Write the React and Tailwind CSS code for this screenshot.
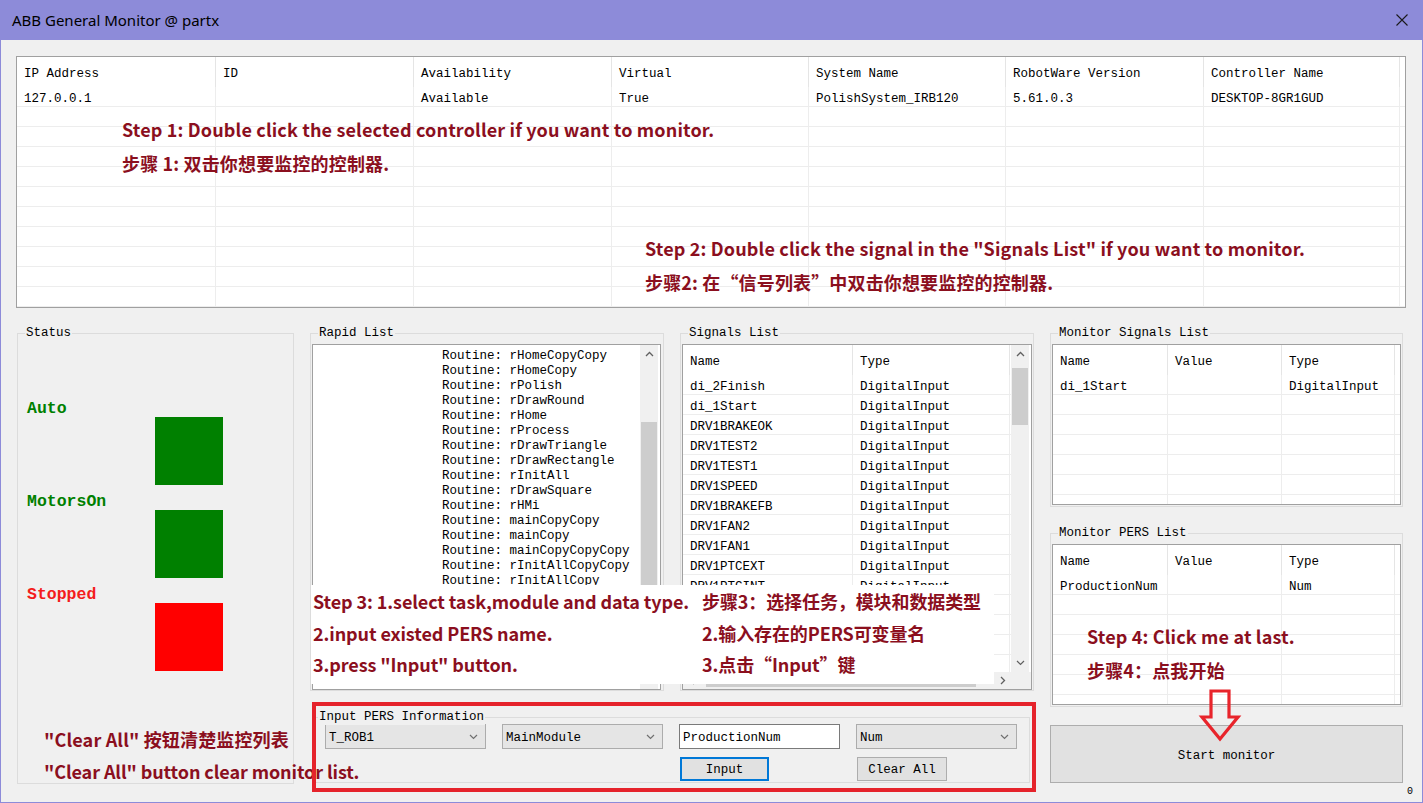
import React from 'react';

const MONO = "font-['Liberation_Mono','DejaVu_Sans_Mono',monospace] text-[12.5px] text-black";
const ANN = "font-['Noto_Sans_CJK_SC',sans-serif] font-bold text-[18px] leading-[20px] tracking-[0.15px] text-[#8b0f1e] whitespace-nowrap";
const ANN0 = "font-['Noto_Sans_CJK_SC',sans-serif] font-bold text-[18px] leading-[20px] tracking-[-0.1px] text-[#8b0f1e] whitespace-nowrap";

function ChevUp() {
  return (
    <svg width="9" height="6" viewBox="0 0 9 6">
      <path d="M1 5 L4.5 1.5 L8 5" fill="none" stroke="#606060" strokeWidth="1.3" />
    </svg>
  );
}
function ChevDown({ color = '#606060' }) {
  return (
    <svg width="9" height="6" viewBox="0 0 9 6">
      <path d="M1 1 L4.5 4.5 L8 1" fill="none" stroke={color} strokeWidth="1.2" />
    </svg>
  );
}
function ChevRight() {
  return (
    <svg width="6" height="9" viewBox="0 0 6 9">
      <path d="M1 1 L4.5 4.5 L1 8" fill="none" stroke="#606060" strokeWidth="1.3" />
    </svg>
  );
}
function ChevLeft() {
  return (
    <svg width="6" height="9" viewBox="0 0 6 9">
      <path d="M5 1 L1.5 4.5 L5 8" fill="none" stroke="#606060" strokeWidth="1.3" />
    </svg>
  );
}

function GroupBox({ label, className = '', labelPos = 'left-[7px]', children }) {
  return (
    <div className={`relative border border-[#dcdcdc] shrink-0 ${className}`}>
      <span className={`absolute -top-[9px] ${labelPos} bg-[#f0f0f0] px-[1px] leading-[16px] whitespace-nowrap ${MONO}`}>
        {label}
      </span>
      {children}
    </div>
  );
}

function Grid({ widths, header, rows, nRows }) {
  return (
    <>
      <div className="flex h-[30px] shrink-0">
        {header.map((h, i) => (
          <div key={i} className={`${widths[i]} shrink-0 h-full border-r border-[#e5e5e5] pl-[7px] pt-[5px] flex items-center whitespace-nowrap`}>
            {h}
          </div>
        ))}
      </div>
      {Array.from({ length: nRows }).map((_, r) => (
        <div key={r} className="flex h-[20px] shrink-0 border-b border-[#ededed]">
          {widths.map((w, i) => (
            <div key={i} className={`${w} shrink-0 h-full border-r border-[#ededed] pl-[7px] pt-[6px] flex items-center whitespace-nowrap overflow-hidden`}>
              {rows[r] ? rows[r][i] : ''}
            </div>
          ))}
        </div>
      ))}
    </>
  );
}

const topWidths = ['w-[199px]', 'w-[198px]', 'w-[198px]', 'w-[197px]', 'w-[197px]', 'w-[198px]', 'w-[196px]'];
const topHeader = ['IP Address', 'ID', 'Availability', 'Virtual', 'System Name', 'RobotWare Version', 'Controller Name'];
const topRows = [['127.0.0.1', '', 'Available', 'True', 'PolishSystem_IRB120', '5.61.0.3', 'DESKTOP-8GR1GUD']];

const routines = [
  'rHomeCopyCopy', 'rHomeCopy', 'rPolish', 'rDrawRound', 'rHome', 'rProcess', 'rDrawTriangle',
  'rDrawRectangle', 'rInitAll', 'rDrawSquare', 'rHMi', 'mainCopyCopy', 'mainCopy', 'mainCopyCopyCopy',
  'rInitAllCopyCopy', 'rInitAllCopy', 'main', 'rTest', 'rReset', 'rStart', 'rStop',
];

const signals = [
  'di_2Finish', 'di_1Start', 'DRV1BRAKEOK', 'DRV1TEST2', 'DRV1TEST1', 'DRV1SPEED', 'DRV1BRAKEFB',
  'DRV1FAN2', 'DRV1FAN1', 'DRV1PTCEXT', 'DRV1PTCINT', 'DRV1K1', 'DRV1K2', 'DRV1LIM1', 'DRV1LIM2',
].map((s) => [s, 'DigitalInput']);

const monWidths = ['w-[115px]', 'w-[114px]', 'w-[113px]'];

function StatusBlock({ label, color, textColor }) {
  return (
    <div>
      <div className={`h-[16px] leading-[16px] font-['Liberation_Mono',monospace] font-bold text-[16.5px] ${textColor}`}>{label}</div>
      <div className={`ml-[128px] w-[68px] h-[68px] ${color}`} />
    </div>
  );
}

function Combo({ text }) {
  return (
    <div className={`flex items-center justify-between border border-[#acacac] bg-[#e5e5e5] h-[25px] pl-[3px] pr-[7px] ${MONO}`}>
      <span className="pt-[3px]">{text}</span>
      <ChevDown color="#707070" />
    </div>
  );
}

function Annotations() {
  return (
    <div className="absolute inset-0 pointer-events-none">
      <div className={`absolute left-[122px] top-[119px] ${ANN}`}>Step 1: Double click the selected controller if you want to monitor.</div>
      <div className={`absolute left-[122px] top-[153px] ${ANN}`}>步骤 1: 双击你想要监控的控制器.</div>
      <div className={`absolute left-[645px] top-[238px] ${ANN}`}>Step 2: Double click the signal in the "Signals List" if you want to monitor.</div>
      <div className={`absolute left-[645px] top-[272px] ${ANN}`}>步骤2: 在“信号列表”中双击你想要监控的控制器.</div>

      <div className="absolute left-[311px] top-[585px] w-[683px] h-[99px] bg-white pl-[2px] pt-[6px] flex flex-col gap-[11.5px]">
        <div className="flex">
          <div className={`w-[389px] ${ANN0}`}>Step 3: 1.select task,module and data type.</div>
          <div className={ANN0}>步骤3：选择任务，模块和数据类型</div>
        </div>
        <div className="flex">
          <div className={`w-[389px] ${ANN0}`}>2.input existed PERS name.</div>
          <div className={ANN0}>2.输入存在的PERS可变量名</div>
        </div>
        <div className="flex">
          <div className={`w-[389px] ${ANN0}`}>3.press "Input" button.</div>
          <div className={ANN0}>3.点击“Input”键</div>
        </div>
      </div>

      <div className={`absolute left-[1087px] top-[626px] ${ANN}`}>Step 4: Click me at last.</div>
      <div className={`absolute left-[1087px] top-[660px] ${ANN}`}>步骤4：点我开始</div>
      <svg className="absolute left-[1198px] top-[688px]" width="44" height="54" viewBox="0 0 44 54">
        <path d="M13 3 L31 3 L31 29 L40 29 L22 51 L4 29 L13 29 Z" fill="none" stroke="#e8242b" strokeWidth="3.2" strokeLinejoin="miter" />
      </svg>

      <div className={`absolute left-[44px] top-[729px] ${ANN}`}>"Clear All" 按钮清楚监控列表</div>
      <div className={`absolute left-[44px] top-[761px] ${ANN0}`}>"Clear All" button clear monitor list.</div>
      <div className="absolute left-[312px] top-[702px] w-[724px] h-[90px] border-4 border-[#e5232b]" />
    </div>
  );
}

export default function App() {
  return (
    <div className="relative w-[1423px] h-[803px] bg-[#8d8bd9] px-[1px] pb-[1px] flex flex-col overflow-hidden">
      {/* Title bar */}
      <div className="h-[40px] shrink-0 flex items-center justify-between pl-[11px] pr-[14px]">
        <span className="font-['Noto_Sans',sans-serif] text-[15px] text-black leading-none">ABB General Monitor @ partx</span>
        <svg width="12" height="12" viewBox="0 0 12 12">
          <path d="M0.5 0.5 L11.5 11.5 M11.5 0.5 L0.5 11.5" stroke="#1a1a1a" strokeWidth="1.1" />
        </svg>
      </div>

      {/* Body */}
      <div className={`flex-1 bg-[#f0f0f0] flex flex-col ${MONO}`}>
        {/* Controllers table */}
        <div className="ml-[15px] mt-[16px] w-[1390px] h-[252px] border border-[#a0a0a0] bg-white overflow-hidden flex flex-col">
          <Grid widths={topWidths} header={topHeader} rows={topRows} nRows={11} />
        </div>

        <div className="flex ml-[16px] mt-[25px]">
          {/* Status */}
          <GroupBox label="Status" className="w-[277px] h-[451px]">
            <div className="pl-[9px] pt-[67px] flex flex-col gap-[9px]">
              <StatusBlock label="Auto" color="bg-[#008000]" textColor="text-[#008000]" />
              <StatusBlock label="MotorsOn" color="bg-[#008000]" textColor="text-[#008000]" />
              <StatusBlock label="Stopped" color="bg-[#ff0000]" textColor="text-[#f41c1c]" />
            </div>
          </GroupBox>

          {/* Middle */}
          <div className="ml-[16px] w-[724px] flex flex-col shrink-0">
            <div className="flex gap-[16px] h-[358px]">
              <GroupBox label="Rapid List" className="w-[354px] h-[358px]">
                <div className="ml-[1px] mt-[10px] w-[349px] h-[346px] border border-[#a0a0a0] bg-white flex overflow-hidden">
                  <div className="flex-1 pl-[129px] pt-[4px] overflow-hidden">
                    {routines.map((r) => (
                      <div key={r} className="h-[15px] leading-[15px] whitespace-pre">{'Routine: ' + r}</div>
                    ))}
                  </div>
                  <div className="w-[18px] mr-[2px] flex flex-col bg-[#f0f0f0] shrink-0">
                    <div className="h-[18px] flex items-center justify-center"><ChevUp /></div>
                    <div className="h-[59px]" />
                    <div className="flex-1 mx-[1px] bg-[#cdcdcd]" />
                    <div className="h-[18px] flex items-center justify-center"><ChevDown /></div>
                  </div>
                </div>
              </GroupBox>

              <GroupBox label="Signals List" className="w-[354px] h-[358px]">
                <div className="ml-[1px] mt-[10px] w-[350px] h-[346px] border border-[#a0a0a0] bg-white flex flex-col overflow-hidden">
                  <div className="flex flex-1 overflow-hidden">
                    <div className="flex-1 flex flex-col overflow-hidden">
                      <Grid widths={['w-[170px]', 'w-[157px]']} header={['Name', 'Type']} rows={signals} nRows={15} />
                    </div>
                    <div className="w-[18px] mr-[2px] flex flex-col bg-[#f0f0f0] shrink-0">
                      <div className="h-[18px] flex items-center justify-center"><ChevUp /></div>
                      <div className="h-[5px]" />
                      <div className="h-[57px] mx-[1px] bg-[#cdcdcd]" />
                      <div className="flex-1" />
                      <div className="h-[18px] flex items-center justify-center"><ChevDown /></div>
                    </div>
                  </div>
                  <div className="h-[17px] flex bg-[#f0f0f0] shrink-0">
                    <div className="w-[17px] flex items-center justify-center"><ChevLeft /></div>
                    <div className="w-[6px]" />
                    <div className="w-[270px] my-[2px] bg-[#cdcdcd]" />
                    <div className="flex-1" />
                    <div className="w-[17px] flex items-center justify-center"><ChevRight /></div>
                    <div className="w-[20px] bg-[#f0f0f0]" />
                  </div>
                </div>
              </GroupBox>
            </div>

            <GroupBox label="Input PERS Information" labelPos="left-[2px]" className="ml-[5px] mt-[26px] w-[715px] h-[66px]">
              <div className="pl-[9px] pt-[6px] grid grid-cols-[161px_161px_161px_161px] gap-x-[16px] gap-y-[8px]">
                <Combo text="T_ROB1" />
                <Combo text="MainModule" />
                <div className="h-[25px] border border-[#7a7a7a] bg-white flex items-center pl-[3px] pt-[3px]">ProductionNum</div>
                <Combo text="Num" />
                <div />
                <div />
                <div className="ml-[1px] w-[89px] h-[24px] border-2 border-[#0078d7] bg-[#e1e1e1] flex items-center justify-center pt-[3px]">Input</div>
                <div className="ml-[1px] w-[90px] h-[24px] border border-[#adadad] bg-[#e1e1e1] flex items-center justify-center pt-[3px]">Clear All</div>
              </div>
            </GroupBox>
          </div>

          {/* Right */}
          <div className="ml-[16px] w-[353px] flex flex-col shrink-0">
            <GroupBox label="Monitor Signals List" className="w-[353px] h-[174px]">
              <div className="ml-[1px] mt-[10px] w-[349px] h-[161px] border border-[#a0a0a0] bg-white flex flex-col overflow-hidden">
                <Grid widths={monWidths} header={['Name', 'Value', 'Type']} rows={[['di_1Start', '', 'DigitalInput']]} nRows={7} />
              </div>
            </GroupBox>
            <GroupBox label="Monitor PERS List" className="mt-[26px] w-[353px] h-[174px]">
              <div className="ml-[1px] mt-[10px] w-[349px] h-[161px] border border-[#a0a0a0] bg-white flex flex-col overflow-hidden">
                <Grid widths={monWidths} header={['Name', 'Value', 'Type']} rows={[['ProductionNum', '', 'Num']]} nRows={7} />
              </div>
            </GroupBox>
            <div className="mt-[18px] w-[353px] h-[58px] border border-[#adadad] bg-[#e1e1e1] flex items-center justify-center pt-[4px]">
              Start monitor
            </div>
          </div>
          <div className="self-end ml-[4px] mb-[-14px] text-[10px] leading-[12px]">0</div>
        </div>
      </div>

      <Annotations />
    </div>
  );
}
